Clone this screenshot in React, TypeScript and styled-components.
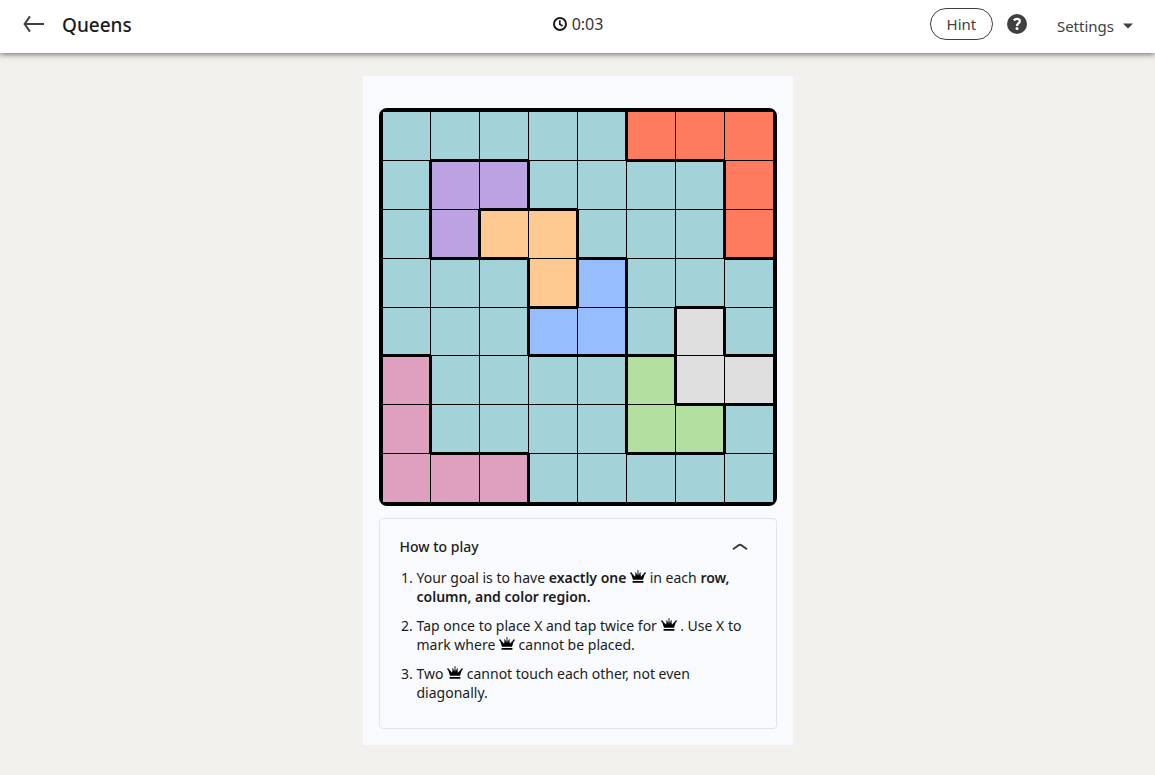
import React, { useEffect, useState } from "react";
import styled, { createGlobalStyle } from "styled-components";

const GlobalStyle = createGlobalStyle`
  *, *::before, *::after { box-sizing: border-box; }
  body {
    margin: 0;
    background: #f3f1ed;
    color: #1b1b1b;
    font-family: "Noto Sans", "Open Sans", sans-serif;
  }
  button { font: inherit; color: inherit; padding: 0; border: 0; background: none; cursor: pointer; }
`;

type Region = "T" | "R" | "P" | "O" | "B" | "G" | "L" | "K";

const REGION_COLORS: Record<Region, string> = {
  T: "#a3d2d8",
  R: "#ff7b60",
  P: "#bba3e2",
  O: "#ffc992",
  B: "#96beff",
  G: "#dfdfdf",
  L: "#b3dfa0",
  K: "#dfa0bf",
};

const REGIONS = [
  "TTTTTRRR",
  "TPPTTTTR",
  "TPOOTTTR",
  "TTTOBTTT",
  "TTTBBTGT",
  "KTTTTLGG",
  "KTTTTLLT",
  "KKKTTTTT",
];

const TopBar = styled.header`
  position: relative;
  display: grid;
  grid-template-columns: 1fr auto 1fr;
  align-items: center;
  height: 53px;
  padding: 0 22px 4px;
  background: #fff;
  box-shadow: 0 1px 6px rgba(0, 0, 0, 0.6);
`;

const TitleGroup = styled.div`
  display: flex;
  align-items: center;
  gap: 16px;
`;

const IconButton = styled.button`
  display: flex;
  color: #404040;
`;

const Title = styled.h1`
  margin: 0;
  font-size: 19px;
  line-height: 24px;
  font-weight: 500;
`;

const Timer = styled.div`
  display: flex;
  align-items: center;
  gap: 4px;
  padding-bottom: 2px;
  font-size: 16px;
  line-height: 20px;
  color: #333;
`;

const Actions = styled.div`
  display: flex;
  align-items: center;
  justify-content: flex-end;
  padding-bottom: 2px;
  color: #404040;
`;

const HintButton = styled.button`
  && {
    min-width: 63px;
    height: 32px;
    padding: 0 15px;
    border: 1px solid #404040;
    border-radius: 16px;
    font-size: 15px;
    line-height: 20px;
  }
`;

const HelpButton = styled(IconButton)`
  margin-left: 14px;
`;

const SettingsButton = styled.button`
  && {
    display: flex;
    align-items: center;
    gap: 9px;
    margin-left: 30px;
    padding-top: 4px;
    font-size: 15px;
    line-height: 20px;
  }
`;

const Page = styled.main`
  padding: 23px 16px 30px;
`;

const GamePanel = styled.section`
  display: flex;
  flex-direction: column;
  gap: 12px;
  max-width: 430px;
  margin: 0 auto;
  padding: 32px 16px 16px;
  background: #f9fafd;
`;

const Board = styled.div`
  display: grid;
  grid-template-columns: 47fr repeat(7, 48fr);
  grid-template-rows: repeat(4, 48fr) 47fr repeat(3, 48fr);
  gap: 1px;
  aspect-ratio: 1;
  border: 4px solid #000;
  border-radius: 8px;
  background: #000;
`;

interface Walls {
  $top: boolean;
  $right: boolean;
  $bottom: boolean;
  $left: boolean;
}

const Cell = styled.button<Walls & { $region: Region }>`
  && {
    min-width: 0;
    min-height: 0;
    font-size: 24px;
    line-height: 24px;
    background: ${(p) => REGION_COLORS[p.$region]};
    box-shadow:
      inset 0 ${(p) => (p.$top ? 1 : 0)}px #000,
      inset ${(p) => (p.$right ? -1 : 0)}px 0 #000,
      inset 0 ${(p) => (p.$bottom ? -1 : 0)}px #000,
      inset ${(p) => (p.$left ? 1 : 0)}px 0 #000;
  }
`;

const HowTo = styled.section`
  padding: 18px 20px 26px;
  border: 1px solid #e3e4e6;
  border-radius: 4px;
  font-size: 14px;
  line-height: 19px;
`;

const HowToHeader = styled.div`
  display: flex;
  align-items: center;
  justify-content: space-between;
  padding-right: 8px;
`;

const HowToTitle = styled.h2`
  margin: 0;
  font-size: 14px;
  line-height: 20px;
  font-weight: 500;
`;

const Rules = styled.ol`
  display: flex;
  flex-direction: column;
  gap: 10px;
  margin: 11px 0 0;
  padding: 0 0 0 17px;
`;

const Rule = styled.li`
  strong { font-weight: 600; }
`;

const CrownSvg = styled.svg`
  vertical-align: baseline;
`;

const Crown = () => (
  <CrownSvg width="16" height="13" viewBox="0 0 16 13" fill="#000" role="img" aria-label="queen">
    <path d="M3 9.8 1.2 4.2 0.2 3.6 0.3 2.4 1.4 2.2 1.9 3.2 5.1 6.8 5.5 3.8 5.1 2.8 5.9 2.2 6.4 3 7.1 5.8 7.7 1.9 7.3 0.9 8 0 8.7 0.9 8.3 1.9 8.9 5.8 9.6 3 10.1 2.2 10.9 2.8 10.5 3.8 10.9 6.8 14.1 3.2 14.6 2.2 15.7 2.4 15.8 3.6 14.8 4.2 13 9.8ZM2.6 11H13.4V12.7H2.6Z" />
  </CrownSvg>
);

const BackIcon = () => (
  <svg width="24" height="20" viewBox="0 0 24 20" fill="none" stroke="currentColor" strokeWidth="2" aria-hidden="true">
    <path d="M2 9H22M8 1.4 2.6 9 8 16.6" />
  </svg>
);

const ClockIcon = () => (
  <svg width="16" height="16" viewBox="0 0 16 16" fill="none" stroke="#1b1b1b" strokeWidth="2" aria-hidden="true">
    <circle cx="8" cy="8" r="6" />
    <path d="M7.8 4.2V8.2L10.6 10" strokeWidth="1.7" />
  </svg>
);

const HelpIcon = () => (
  <svg width="20" height="20" viewBox="0 0 20 20" aria-hidden="true">
    <circle cx="10" cy="10" r="10" fill="currentColor" />
    <path d="M6.9 6.5C7.6 5.4 8.7 4.9 10 4.9C11.7 4.9 12.8 5.8 12.8 7.2C12.8 9.4 10 9.4 10 11.9" fill="none" stroke="#fff" strokeWidth="2.4" />
    <circle cx="10" cy="14.6" r="1.5" fill="#fff" />
  </svg>
);

const CaretIcon = () => (
  <svg width="10" height="6" viewBox="0 0 10 6" fill="currentColor" aria-hidden="true">
    <path d="M0 0.4H10L5 5.4Z" />
  </svg>
);

const ChevronIcon = ({ open }: { open: boolean }) => (
  <svg width="16" height="8" viewBox="0 0 16 8" fill="none" stroke="currentColor" strokeWidth="2" aria-hidden="true">
    <path d={open ? "M1 6.2 6.4 2.4Q8 1.2 9.6 2.4L15 6.2" : "M1 1.8 6.4 5.6Q8 6.8 9.6 5.6L15 1.8"} />
  </svg>
);

const MARKS = ["", "✕", "♛"];

function useClock(start: number) {
  const [seconds, setSeconds] = useState(start);
  useEffect(() => {
    const id = window.setInterval(() => {
      if (document.hasFocus()) setSeconds((s) => (s < start ? s + 1 : s));
    }, 1000);
    return () => window.clearInterval(id);
  }, [start]);
  return `${Math.floor(seconds / 60)}:${String(seconds % 60).padStart(2, "0")}`;
}

export default function App() {
  const time = useClock(3);
  const [open, setOpen] = useState(true);
  const [marks, setMarks] = useState<number[]>(() => Array(64).fill(0));

  const cycle = (index: number) =>
    setMarks((prev) => prev.map((m, i) => (i === index ? (m + 1) % 3 : m)));

  const differs = (r: number, c: number, r2: number, c2: number) =>
    REGIONS[r2]?.[c2] !== undefined && REGIONS[r2][c2] !== REGIONS[r][c];

  return (
    <>
      <GlobalStyle />
      <TopBar>
        <TitleGroup>
          <IconButton type="button" aria-label="Back">
            <BackIcon />
          </IconButton>
          <Title>Queens</Title>
        </TitleGroup>
        <Timer>
          <ClockIcon />
          <span>{time}</span>
        </Timer>
        <Actions>
          <HintButton type="button">Hint</HintButton>
          <HelpButton type="button" aria-label="Help">
            <HelpIcon />
          </HelpButton>
          <SettingsButton type="button">
            Settings
            <CaretIcon />
          </SettingsButton>
        </Actions>
      </TopBar>
      <Page>
        <GamePanel>
          <Board>
            {REGIONS.flatMap((row, r) =>
              [...row].map((region, c) => (
                <Cell
                  key={`${r}-${c}`}
                  type="button"
                  aria-label={`Row ${r + 1}, column ${c + 1}`}
                  $region={region as Region}
                  $top={differs(r, c, r - 1, c)}
                  $right={differs(r, c, r, c + 1)}
                  $bottom={differs(r, c, r + 1, c)}
                  $left={differs(r, c, r, c - 1)}
                  onClick={() => cycle(r * 8 + c)}
                >
                  {MARKS[marks[r * 8 + c]]}
                </Cell>
              ))
            )}
          </Board>
          <HowTo>
            <HowToHeader>
              <HowToTitle>How to play</HowToTitle>
              <IconButton type="button" aria-label="Toggle rules" aria-expanded={open} onClick={() => setOpen(!open)}>
                <ChevronIcon open={open} />
              </IconButton>
            </HowToHeader>
            {open && (
              <Rules>
                <Rule>
                  Your goal is to have <strong>exactly one</strong> <Crown /> in each{" "}
                  <strong>row, column, and color region.</strong>
                </Rule>
                <Rule>
                  Tap once to place X and tap twice for <Crown /> . Use X to mark where <Crown /> cannot be placed.
                </Rule>
                <Rule>
                  Two <Crown /> cannot touch each other, not even diagonally.
                </Rule>
              </Rules>
            )}
          </HowTo>
        </GamePanel>
      </Page>
    </>
  );
}
